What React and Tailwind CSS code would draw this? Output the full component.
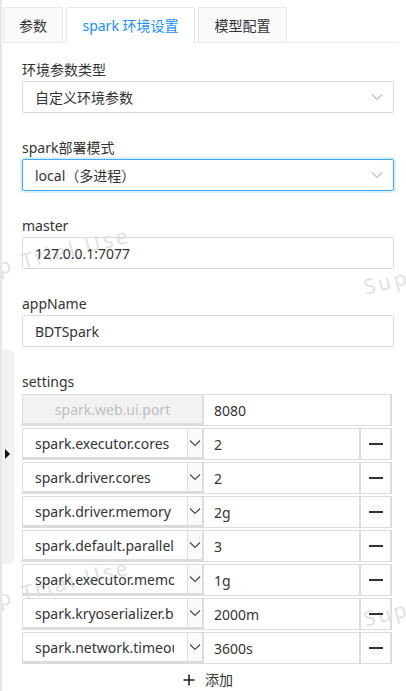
import React from "react";

const font = { fontFamily: '"Noto Sans", "Noto Sans CJK SC", sans-serif' };

function Chevron({ className = "" }) {
  return (
    <svg width="12" height="8" viewBox="0 0 12 8" className={className} fill="none">
      <path d="M1 1.5 L6 6.5 L11 1.5" stroke="currentColor" strokeWidth="1.1" />
    </svg>
  );
}

function Field({ label, children }) {
  return (
    <div className="mb-[24px]">
      <div className="h-[22px] leading-[22px] text-[14px] text-[#333]">{label}</div>
      {children}
    </div>
  );
}

function SelectBox({ value, focused }) {
  return (
    <div
      className={
        "h-[32px] rounded-[2px] border flex items-center pl-[12px] pr-[10px] text-[14px] text-[#333] " +
        (focused ? "border-[#40a9ff] shadow-[0_0_0_2px_rgba(24,144,255,0.15)]" : "border-[#d9d9d9]")
      }
    >
      <span className="flex-1">{value}</span>
      <Chevron className="text-[#bfbfbf]" />
    </div>
  );
}

function InputBox({ value }) {
  return (
    <div className="h-[32px] rounded-[2px] border border-[#d9d9d9] flex items-center pl-[12px] text-[14px] text-[#333]">
      {value}
    </div>
  );
}

const rows = [
  ["spark.executor.cores", "2"],
  ["spark.driver.cores", "2"],
  ["spark.driver.memory", "2g"],
  ["spark.default.parallelism", "3"],
  ["spark.executor.memory", "1g"],
  ["spark.kryoserializer.buffer.max", "2000m"],
  ["spark.network.timeout", "3600s"],
];

function Watermark({ left, top, text }) {
  return (
    <div
      className="absolute pointer-events-none whitespace-nowrap text-[21px] tracking-[3px] text-[#e2e2e2] origin-left -rotate-[14deg]"
      style={{ left, top }}
    >
      {text}
    </div>
  );
}

export default function App() {
  return (
    <div
      className="relative w-[406px] h-[691px] overflow-hidden bg-white border-l-2 border-[#e6e6e6]"
      style={font}
    >
      {/* tabs */}
      <div className="ml-[1px] mr-[8px] mt-[7px] flex gap-[3px] border-b border-[#e8e8e8] text-[14px]">
        <div className="w-[60px] h-[35px] flex items-center justify-center border border-b-0 border-[#e8e8e8] rounded-t-[2px] bg-[#fafafa] text-[#333]">
          参数
        </div>
        <div className="w-[129px] h-[36px] -mb-px flex items-center justify-center border border-b-0 border-[#e8e8e8] rounded-t-[2px] bg-white text-[#1890ff]">
          spark 环境设置
        </div>
        <div className="w-[89px] h-[35px] flex items-center justify-center border border-b-0 border-[#e8e8e8] rounded-t-[2px] bg-[#fafafa] text-[#333]">
          模型配置
        </div>
      </div>

      {/* watermarks (under the content) */}
      <Watermark left={-4} top={252} text="p  Trial Use" />
      <Watermark left={362} top={272} text="SuperMap" />
      <Watermark left={-4} top={584} text="p  Trial Use" />
      <Watermark left={362} top={604} text="SuperMap" />

      {/* form */}
      <div className="relative pl-[20px] pt-[16px] w-[392px]">
        <Field label="环境参数类型">
          <SelectBox value="自定义环境参数" />
        </Field>
        <Field label="spark部署模式">
          <SelectBox value="local（多进程）" focused />
        </Field>
        <Field label="master">
          <InputBox value="127.0.0.1:7077" />
        </Field>
        <Field label="appName">
          <InputBox value="BDTSpark" />
        </Field>

        <div className="h-[22px] leading-[22px] text-[14px] text-[#333]">settings</div>
        <div className="mt-[1px] flex flex-col gap-[2px] text-[14px]">
          <div className="flex h-[32px]">
            <div className="w-[181px] border border-b-[3px] border-[#dcdcdc] bg-[#f2f2f2] text-[#bfbfbf] flex items-center justify-center">
              spark.web.ui.port
            </div>
            <div className="w-[189px] border border-r-[2px] border-[#dcdcdc] flex items-center pl-[10px] text-[#333]">
              8080
            </div>
          </div>
          {rows.map(([k, v]) => (
            <div key={k} className="flex h-[32px]">
              <div className="w-[181px] flex border border-b-[3px] border-[#dcdcdc]">
                <div className="w-[164px] pl-[12px] flex items-center text-[#333]">
                  <span className="block w-[139px] shrink-0 overflow-hidden whitespace-nowrap">{k}</span>
                </div>
                <div className="flex-1 border-l border-[#dcdcdc] bg-[#fafafa] flex items-center justify-center">
                  <Chevron className="text-[#444]" />
                </div>
              </div>
              <div className="w-[157px] border border-[#dcdcdc] flex items-center pl-[10px] text-[#333]">
                {v}
              </div>
              <div className="w-[32px] border border-r-[2px] border-[#dcdcdc] flex items-center justify-center">
                <div className="w-[14px] h-[2px] bg-[#333]" />
              </div>
            </div>
          ))}
        </div>
        <div className="mt-[5px] flex items-center justify-center gap-[10px] text-[14px] text-[#333]">
          <svg width="12" height="12" viewBox="0 0 12 12">
            <path d="M6 0.5 V11.5 M0.5 6 H11.5" stroke="#222" strokeWidth="1.6" />
          </svg>
          <span>添加</span>
        </div>
      </div>

      {/* collapsed side handle */}
      <div className="absolute left-0 top-[350px] w-[13px] h-[214px] bg-[#f2f2f2] rounded-r-[6px] flex items-center">
        <svg width="6" height="10" viewBox="0 0 6 10" className="ml-[3px] mt-[-6px]">
          <path d="M0 0 L5 5 L0 10 Z" fill="#111" />
        </svg>
      </div>
    </div>
  );
}
